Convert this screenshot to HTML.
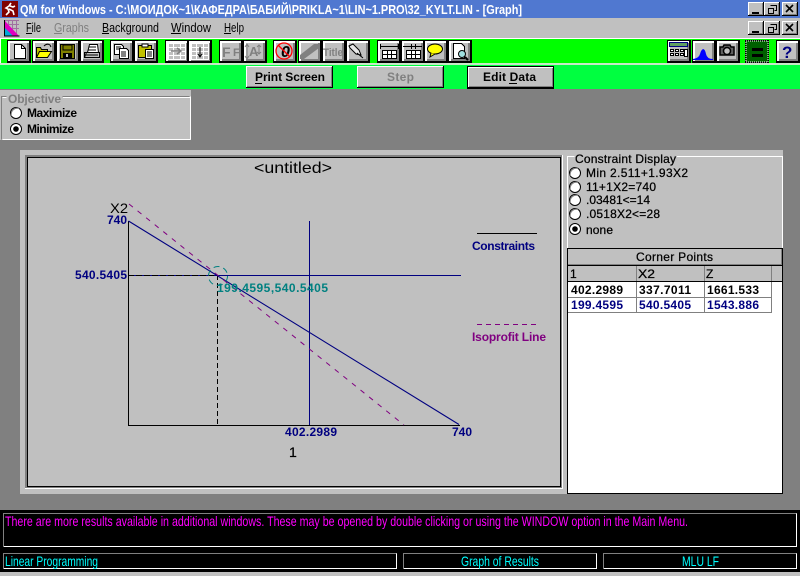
<!DOCTYPE html>
<html><head><meta charset="utf-8"><style>
html,body{margin:0;padding:0;background:#808080;width:800px;height:576px;overflow:hidden}
svg{display:block;font-family:"Liberation Sans","Noto Sans CJK SC",sans-serif}
.c{shape-rendering:crispEdges}
.b{font-weight:bold;font-size:12px}
.n{fill:#000080}
.d{stroke:#000;stroke-width:.25px}
</style></head><body>
<svg width="800" height="576" viewBox="0 0 800 576" xmlns="http://www.w3.org/2000/svg">
<defs>
<g id="tb" class="c"><rect width="24" height="23" fill="#000"/><rect x="1" y="1" width="21" height="20" fill="#c0c0c0"/><rect x="1" y="1" width="21" height="2" fill="#fff"/><rect x="1" y="1" width="2" height="20" fill="#fff"/><rect x="3" y="19" width="19" height="2" fill="#808080"/><rect x="20" y="3" width="2" height="18" fill="#808080"/></g>
<g id="wb" class="c"><rect width="16" height="14" fill="#000"/><rect width="15" height="13" fill="#fff"/><rect x="1" y="1" width="14" height="12" fill="#808080"/><rect x="1" y="1" width="13" height="11" fill="#c0c0c0"/></g>
<g id="rd"><circle r="5.5" fill="#fff" stroke="#000" stroke-width="1"/><path d="M-4.5 3A6 6 0 0 1 3-4.5" fill="none" stroke="#808080" stroke-width="1"/></g>
<g id="rx"><circle r="5.5" fill="#fff" stroke="#000" stroke-width="1"/><circle r="2.8" fill="#000"/></g>
</defs>

<rect width="800" height="576" fill="#808080"/>
<!-- Title bar -->
<rect class="c" width="800" height="18" fill="#5078d0"/>
<rect class="c" x="2" y="1" width="16" height="16" fill="#800000"/>
<path d="M11 3l-2 3-3 2 2 1 1 3-3 3M9 9l4 2 1 4M10 6l3 1 2-1" fill="none" stroke="#fff" stroke-width="1.600"/>
<text x="20" y="14" fill="#fff" font-weight="bold" font-size="13" textLength="502" lengthAdjust="spacingAndGlyphs">QM for Windows - C:\МОИДОК~1\КАФЕДРА\БАБИЙ\PRIKLA~1\LIN~1.PRO\32_KYLT.LIN - [Graph]</text>
<use href="#wb" x="748" y="2"/><use href="#wb" x="764" y="2"/><use href="#wb" x="782" y="2"/>
<path class="c" d="M752 12h7v2h-7z" fill="#000"/>
<path d="M770.500 5.500h6v5h-2M768.500 8.500h5v5h-5z" fill="none" stroke="#000" class="c"/>
<path d="M786 5l7 7M793 5l-7 7" stroke="#000" stroke-width="1.600" fill="none"/>

<!-- Menu -->
<rect class="c" y="18" width="800" height="20" fill="#c0c0c0"/>
<path d="M5 20.500h14M5 24.500h14M5 28.500h14M8.500 20v16M12.500 20v16M16.500 20v16" stroke="#a070a0" stroke-width="1" fill="none"/>
<path d="M5 21V36H19z" fill="#e000c0"/><path d="M5 28V36H13z" fill="#00a8d8"/><path d="M4.500 20v16h15" stroke="#000" fill="none"/>
<g font-size="13">
<text x="26" y="32" textLength="15" lengthAdjust="spacingAndGlyphs">File</text>
<text x="54" y="32" fill="#808080" textLength="35" lengthAdjust="spacingAndGlyphs">Graphs</text>
<text x="102" y="32" textLength="57" lengthAdjust="spacingAndGlyphs">Background</text>
<text x="171" y="32" textLength="40" lengthAdjust="spacingAndGlyphs">Window</text>
<text x="224" y="32" textLength="20" lengthAdjust="spacingAndGlyphs">Help</text>
</g>
<path class="c" d="M26 33h6v1h-6zM102 33h7v1h-7zM171 33h10v1h-10zM224 33h7v1h-7z" fill="#000"/>
<path class="c" d="M54 33h8v1h-8z" fill="#808080"/>
<use href="#wb" x="748" y="21"/><use href="#wb" x="764" y="21"/><use href="#wb" x="782" y="21"/>
<path class="c" d="M752 31h7v2h-7z" fill="#000"/>
<path d="M770.500 24.500h6v5h-2M768.500 27.500h5v5h-5z" fill="none" stroke="#000" class="c"/>
<path d="M786 24l7 7M793 24l-7 7" stroke="#000" stroke-width="1.600" fill="none"/>

<!-- Green toolbars -->
<rect class="c" y="38" width="800" height="1" fill="#fff"/>
<rect class="c" y="39" width="800" height="24" fill="#00ff00"/>
<rect class="c" x="0" y="39" width="1" height="24" fill="#fff"/>
<rect class="c" y="63" width="800" height="2" fill="#c8e8c8"/>
<rect class="c" y="65" width="800" height="24" fill="#00ff40"/>
<rect class="c" y="89" width="800" height="1" fill="#808080"/>

<!-- Toolbar buttons -->
<use href="#tb" x="7" y="40"/><use href="#tb" x="32" y="40"/><use href="#tb" x="56" y="40"/><use href="#tb" x="80" y="40"/>
<use href="#tb" x="110" y="40"/><use href="#tb" x="134" y="40"/>
<use href="#tb" x="165" y="40"/><use href="#tb" x="188" y="40"/>
<use href="#tb" x="219" y="40"/><use href="#tb" x="243" y="40"/>
<use href="#tb" x="273" y="40"/><use href="#tb" x="298" y="40"/><use href="#tb" x="322" y="40"/><use href="#tb" x="346" y="40"/>
<use href="#tb" x="377" y="40"/><use href="#tb" x="401" y="40"/><use href="#tb" x="424" y="40"/><use href="#tb" x="448" y="40"/>
<use href="#tb" x="667" y="40"/><use href="#tb" x="692" y="40"/><use href="#tb" x="716" y="40"/>
<use href="#tb" x="745" y="40"/><use href="#tb" x="776" y="40"/>

<!-- New -->
<path d="M14.500 44.500h7l4 4v10h-11z" fill="#fff" stroke="#000" class="c"/><path d="M21.500 44.500v4h4" fill="none" stroke="#000" class="c"/>
<!-- Open -->
<path d="M36.500 47.500h4l1 2h6v8h-11z" fill="#c0c000" stroke="#000"/><path d="M36.500 57.500l3-6h12l-4 6z" fill="#ffff00" stroke="#000"/><path d="M44 46q3-3 6-1l1 2" fill="none" stroke="#000"/>
<!-- Save -->
<rect class="c" x="60.500" y="44.500" width="14" height="14" fill="#808000" stroke="#000"/><rect class="c" x="63" y="45" width="9" height="5" fill="#808000" stroke="#000"/><rect class="c" x="63" y="53" width="9" height="5" fill="#000"/><rect class="c" x="66" y="54" width="2" height="3" fill="#c0c0c0"/>
<!-- Print -->
<path d="M84.500 52.500h15v5h-15z" fill="#c0c0c0" stroke="#000"/><path d="M87.500 52.500l2-8h8l1 8z" fill="#fff" stroke="#000"/><path d="M86 55h12M89 47h7M88 50h8" stroke="#000"/><path d="M84.500 57.500l2-5" stroke="#000"/>
<!-- Copy/Paste -->
<path d="M114.500 44.500h7l2 2v8h-9z" fill="#fff" stroke="#000" class="c"/><path d="M119.500 48.500h7l2 2v8h-9z" fill="#fff" stroke="#000" class="c"/><path d="M116 47h5M116 49h3M121 52h5M121 54h5M121 56h5" stroke="#000" class="c"/>
<rect class="c" x="138.500" y="45.500" width="13" height="12" fill="#c0c000" stroke="#000"/><rect class="c" x="142" y="44" width="6" height="3" fill="#fff" stroke="#000"/><path class="c" d="M145.500 49.500h8v9h-8z" fill="#fff" stroke="#000"/><path class="c" d="M147 52h5M147 54h5M147 56h5" stroke="#000"/>
<!-- Table icons -->
<g class="c" fill="none" stroke="#fff"><path d="M168.500 43.500h17v16h-17zM168.500 47.500h17M168.500 51.500h17M168.500 55.500h17M173.500 43.500v16M180.500 43.500v16"/><path d="M191.500 43.500h17v16h-17zM191.500 47.500h17M191.500 51.500h17M191.500 55.500h17M196.500 43.500v16M203.500 43.500v16"/></g>
<path d="M171 51h9M177 48l4 3-4 3" stroke="#808080" fill="none" stroke-width="1.500"/>
<path d="M200 47v9M198 54l2 3 2-3" stroke="#000" fill="none"/>
<!-- Disabled F F, A -->
<text x="222" y="57" fill="#808080" font-size="14" font-weight="bold" textLength="9">F</text>
<text x="233" y="56" fill="#808080" font-size="11" font-weight="bold" textLength="7">F</text>
<text x="249" y="56" fill="#808080" font-size="13" font-weight="bold" textLength="9">A</text>
<path d="M247 44v15M245 47l2-3 2 3M245 56l2 3 2-3M259 45v9M257 47l2-2 2 2M257 52l2 2 2-2" stroke="#808080" fill="none"/>
<!-- No zero -->
<text x="281" y="57" font-size="16" font-weight="bold" font-style="italic" fill="#000">0</text>
<circle cx="284" cy="51" r="8" fill="none" stroke="#ff0000" stroke-width="1.300"/><path d="M278 45l12 12" stroke="#ff0000" stroke-width="1.300"/>
<!-- Grey slash -->
<path d="M300 59v-4l14-11h5v4l-15 11z" fill="#808080"/>
<text x="323" y="56" font-size="11" font-weight="bold" fill="#808080" textLength="20" lengthAdjust="spacingAndGlyphs">Title</text>
<!-- Pin -->
<path d="M349 46l4-2 6 6 2 5-5-1-6-6zM357 53l6 5" fill="#e8e8e8" stroke="#000"/>
<!-- Col width, row width -->
<g class="c" fill="none" stroke="#000"><path d="M382.500 50.500h14v8h-14zM382.500 54.500h14M387.500 50.500v8M391.500 50.500v8" fill="#fff"/><path d="M406.500 50.500h14v8h-14zM406.500 54.500h14M411.500 50.500v8M415.500 50.500v8" fill="#fff"/><path d="M380 46.500h19M380.500 44v5M398.500 44v5M403 46.500h19M411.500 44v5M415.500 44v5"/></g>
<!-- Speech -->
<ellipse cx="435" cy="49" rx="7.500" ry="5" fill="#ffff00" stroke="#000"/><path d="M431 53l-1 4 5-3" fill="#ffff00" stroke="#000"/>
<!-- Preview -->
<path class="c" d="M453.500 43.500h8l3 3v12h-11z" fill="#fff" stroke="#000"/><circle cx="462" cy="54" r="3.500" fill="#a0e0e0" stroke="#000"/><path d="M465 57l3 3" stroke="#000" stroke-width="2"/>
<!-- Calc -->
<rect class="c" x="669.500" y="42.500" width="18" height="4" fill="#60a060" stroke="#000080"/><g class="c" fill="#fff" stroke="#000"><path d="M670.500 49.500h3v2h-3zM675.500 49.500h3v2h-3zM680.500 49.500h3v2h-3zM670.500 53.500h3v2h-3zM675.500 53.500h3v2h-3zM680.500 53.500h3v2h-3z"/><path d="M684.500 49.500h3v7h-3z"/></g>
<!-- Normal curve -->
<path d="M693 59q6-1 7-5t3-5q2 0 3 5t7 5z" fill="#0000ff"/><path class="c" d="M693 59h20v1h-20z" fill="#0000ff"/>
<!-- Camera -->
<path d="M720 47h3l1-2h6l1 2h3v8h-14z" fill="#606060" stroke="#000" stroke-width="1.500"/><circle cx="727" cy="51" r="3.500" fill="#c0c0c0" stroke="#000" stroke-width="1.500"/>
<!-- Equal -->
<rect class="c" x="746" y="41" width="22" height="21" fill="#006000" stroke="#fff" stroke-dasharray="1 1"/><path class="c" d="M752 48h11v3h-11zM752 54h11v3h-11z" fill="#000"/>
<!-- Help -->
<text x="782" y="58" font-size="17" font-weight="bold" fill="#000080">?</text>

<!-- Big buttons -->
<g class="c">
<rect x="246" y="66" width="87" height="22" fill="#000"/><rect x="246" y="66" width="86" height="21" fill="#fff"/><rect x="247" y="67" width="85" height="20" fill="#808080"/><rect x="247" y="67" width="84" height="19" fill="#c0c0c0"/>
<rect x="357" y="66" width="87" height="22" fill="#000"/><rect x="357" y="66" width="86" height="21" fill="#fff"/><rect x="358" y="67" width="85" height="20" fill="#808080"/><rect x="358" y="67" width="84" height="19" fill="#c0c0c0"/>
<rect x="467" y="66" width="87" height="23" fill="#000"/><rect x="468" y="67" width="85" height="20" fill="#fff"/><rect x="469" y="68" width="84" height="19" fill="#808080"/><rect x="469" y="68" width="83" height="18" fill="#c0c0c0"/>
</g>
<text x="255" y="81" class="b" textLength="70" lengthAdjust="spacing">Print Screen</text>
<path class="c" d="M255 83h7v1h-7z" fill="#000"/>
<text x="387" y="81" class="b" fill="#808080" textLength="27" lengthAdjust="spacing">Step</text>
<text x="483" y="81" class="b" textLength="53" lengthAdjust="spacing">Edit Data</text>
<path class="c" d="M509 83h8v1h-8z" fill="#000"/>

<!-- Objective -->
<rect class="c" x="0" y="90" width="191" height="50" fill="#c0c0c0"/>
<path class="c" d="M1.500 139.500V96.500h5M62.500 96.500h127" fill="none" stroke="#808080"/>
<path class="c" d="M2.500 139.500h188M190.500 96.500v43M63 97.500h127M2.500 97.500h4" fill="none" stroke="#fff"/>
<text x="8" y="103" class="b" fill="#808080" textLength="53" lengthAdjust="spacing">Objective</text>
<use href="#rd" x="16" y="113"/><use href="#rx" x="16" y="129"/>
<text x="27" y="117" class="b" textLength="50" lengthAdjust="spacing">Maximize</text>
<text x="27" y="133" class="b" textLength="47" lengthAdjust="spacing">Minimize</text>

<!-- Graph panel -->
<g class="c">
<rect x="20" y="150" width="547" height="344" fill="#c0c0c0"/>
<rect x="25" y="155" width="538" height="334" fill="#fff"/>
<rect x="25" y="155" width="537" height="333" fill="#808080"/>
<rect x="27" y="157" width="534" height="330" fill="#000"/>
<rect x="28" y="158" width="532" height="328" fill="#c0c0c0"/>
</g>
<text x="254" y="173" font-size="16" textLength="78" lengthAdjust="spacingAndGlyphs">&lt;untitled&gt;</text>
<text x="110" y="213" font-size="14" textLength="18" lengthAdjust="spacingAndGlyphs">X2</text>
<text x="107" y="224" class="b n" textLength="20">740</text>
<text x="75" y="279" class="b n" textLength="52">540.5405</text>
<text x="285" y="436" class="b n" textLength="52">402.2989</text>
<text x="452" y="436" class="b n" textLength="20">740</text>
<text x="289" y="457" font-size="14" class="d" textLength="7">1</text>
<!-- lines -->
<path class="c" d="M128.500 221v205M128 425.500h332" stroke="#000" fill="none"/>
<path class="c" d="M128 275.500h333M309.500 221v204" stroke="#000080" fill="none"/>
<path class="c" d="M128 275.500h89" stroke="#000" stroke-dasharray="6 2" fill="none"/>
<path class="c" d="M217.500 275v150" stroke="#000" stroke-dasharray="5 3" fill="none"/>
<path d="M128.500 221L459 424.500" stroke="#000080" fill="none" stroke-width="1.100"/>
<path d="M129 204L404 425" stroke="#800080" fill="none" stroke-dasharray="5 6" stroke-width="1"/>
<circle cx="218" cy="276" r="9.500" fill="none" stroke="#008080" stroke-dasharray="6 4"/>
<text x="217" y="292" class="b" fill="#008080" textLength="111">199.4595,540.5405</text>
<path class="c" d="M477 233.500h60" stroke="#000"/>
<text x="472" y="250" class="b n" textLength="63" lengthAdjust="spacing">Constraints</text>
<path class="c" d="M477 324.500h60" stroke="#800080" stroke-dasharray="5 4"/>
<text x="472" y="341" class="b" fill="#800080" textLength="74" lengthAdjust="spacing">Isoprofit Line</text>

<!-- Right panel -->
<g class="c">
<rect x="567" y="150" width="216" height="344" fill="#fff"/>
<rect x="567" y="150" width="216" height="99" fill="#c0c0c0"/>
<path d="M567.500 248V156.500h7M677 156.500h105.500V248" fill="none" stroke="#fff"/>
<rect x="567" y="248" width="216" height="18" fill="#000"/>
<rect x="568" y="249" width="214" height="16" fill="#c0c0c0"/>
<path d="M568 264.500h214M781.500 249v16" stroke="#808080"/>
<rect x="568" y="266" width="214" height="16" fill="#c0c0c0"/>
<path d="M636.500 266v47M704.500 266v47M771.500 266v47" stroke="#808080"/>
<path d="M568 281.500h214" stroke="#000"/>
<path d="M568 297.500h204M568 312.500h204" stroke="#808080"/>
<path d="M567.500 248v245.500h215V248" fill="none" stroke="#000"/>
</g>
<text x="575" y="163" font-size="12" class="d" textLength="101" lengthAdjust="spacing">Constraint Display</text>
<use href="#rd" x="575" y="173"/><use href="#rd" x="575" y="187"/><use href="#rd" x="575" y="200"/><use href="#rd" x="575" y="214"/><use href="#rx" x="575" y="229"/>
<g font-size="12" class="d">
<text x="586" y="177" textLength="102" lengthAdjust="spacing">Min 2.511+1.93X2</text>
<text x="586" y="191" textLength="70" lengthAdjust="spacing">11+1X2=740</text>
<text x="586" y="204" textLength="64" lengthAdjust="spacing">.03481&lt;=14</text>
<text x="586" y="218" textLength="74" lengthAdjust="spacing">.0518X2&lt;=28</text>
<text x="586" y="234" textLength="27" lengthAdjust="spacing">none</text>
<text x="636" y="261" textLength="77" lengthAdjust="spacing">Corner Points</text>
<text x="570" y="278">1</text>
<text x="638" y="278" textLength="17" lengthAdjust="spacingAndGlyphs">X2</text>
<text x="706" y="278">Z</text>
</g>
<g class="b">
<text x="571" y="294" textLength="52">402.2989</text><text x="639" y="294" textLength="52">337.7011</text><text x="707" y="294" textLength="52">1661.533</text>
<g class="n"><text x="571" y="309" textLength="52">199.4595</text><text x="639" y="309" textLength="52">540.5405</text><text x="707" y="309" textLength="52">1543.886</text></g>
</g>

<!-- Status -->
<g class="c">
<rect y="510" width="800" height="62" fill="#000"/>
<rect y="572" width="800" height="4" fill="#c0c0c0"/>
<rect x="3.500" y="513.500" width="793" height="33" fill="#000" stroke="#fff"/><path d="M3.500 547V513.500h793" fill="none" stroke="#808080"/>
<rect x="3.500" y="553.500" width="393" height="15" fill="#000" stroke="#fff"/><path d="M3.500 569V553.500h393" fill="none" stroke="#808080"/>
<rect x="403.500" y="553.500" width="193" height="15" fill="#000" stroke="#fff"/><path d="M403.500 569V553.500h193" fill="none" stroke="#808080"/>
<rect x="603.500" y="553.500" width="193" height="15" fill="#000" stroke="#fff"/><path d="M603.500 569V553.500h193" fill="none" stroke="#808080"/>
</g>
<text x="5" y="526" font-size="14" fill="#ff00ff" textLength="683" lengthAdjust="spacingAndGlyphs">There are more results available in additional windows. These may be opened by double clicking or using the WINDOW option in the Main Menu.</text>
<g font-size="14" fill="#00ffff">
<text x="5" y="566" textLength="93" lengthAdjust="spacingAndGlyphs">Linear Programming</text>
<text x="461" y="566" textLength="78" lengthAdjust="spacingAndGlyphs">Graph of Results</text>
<text x="682" y="566" textLength="37" lengthAdjust="spacingAndGlyphs">MLU LF</text>
</g>
</svg>
</body></html>
